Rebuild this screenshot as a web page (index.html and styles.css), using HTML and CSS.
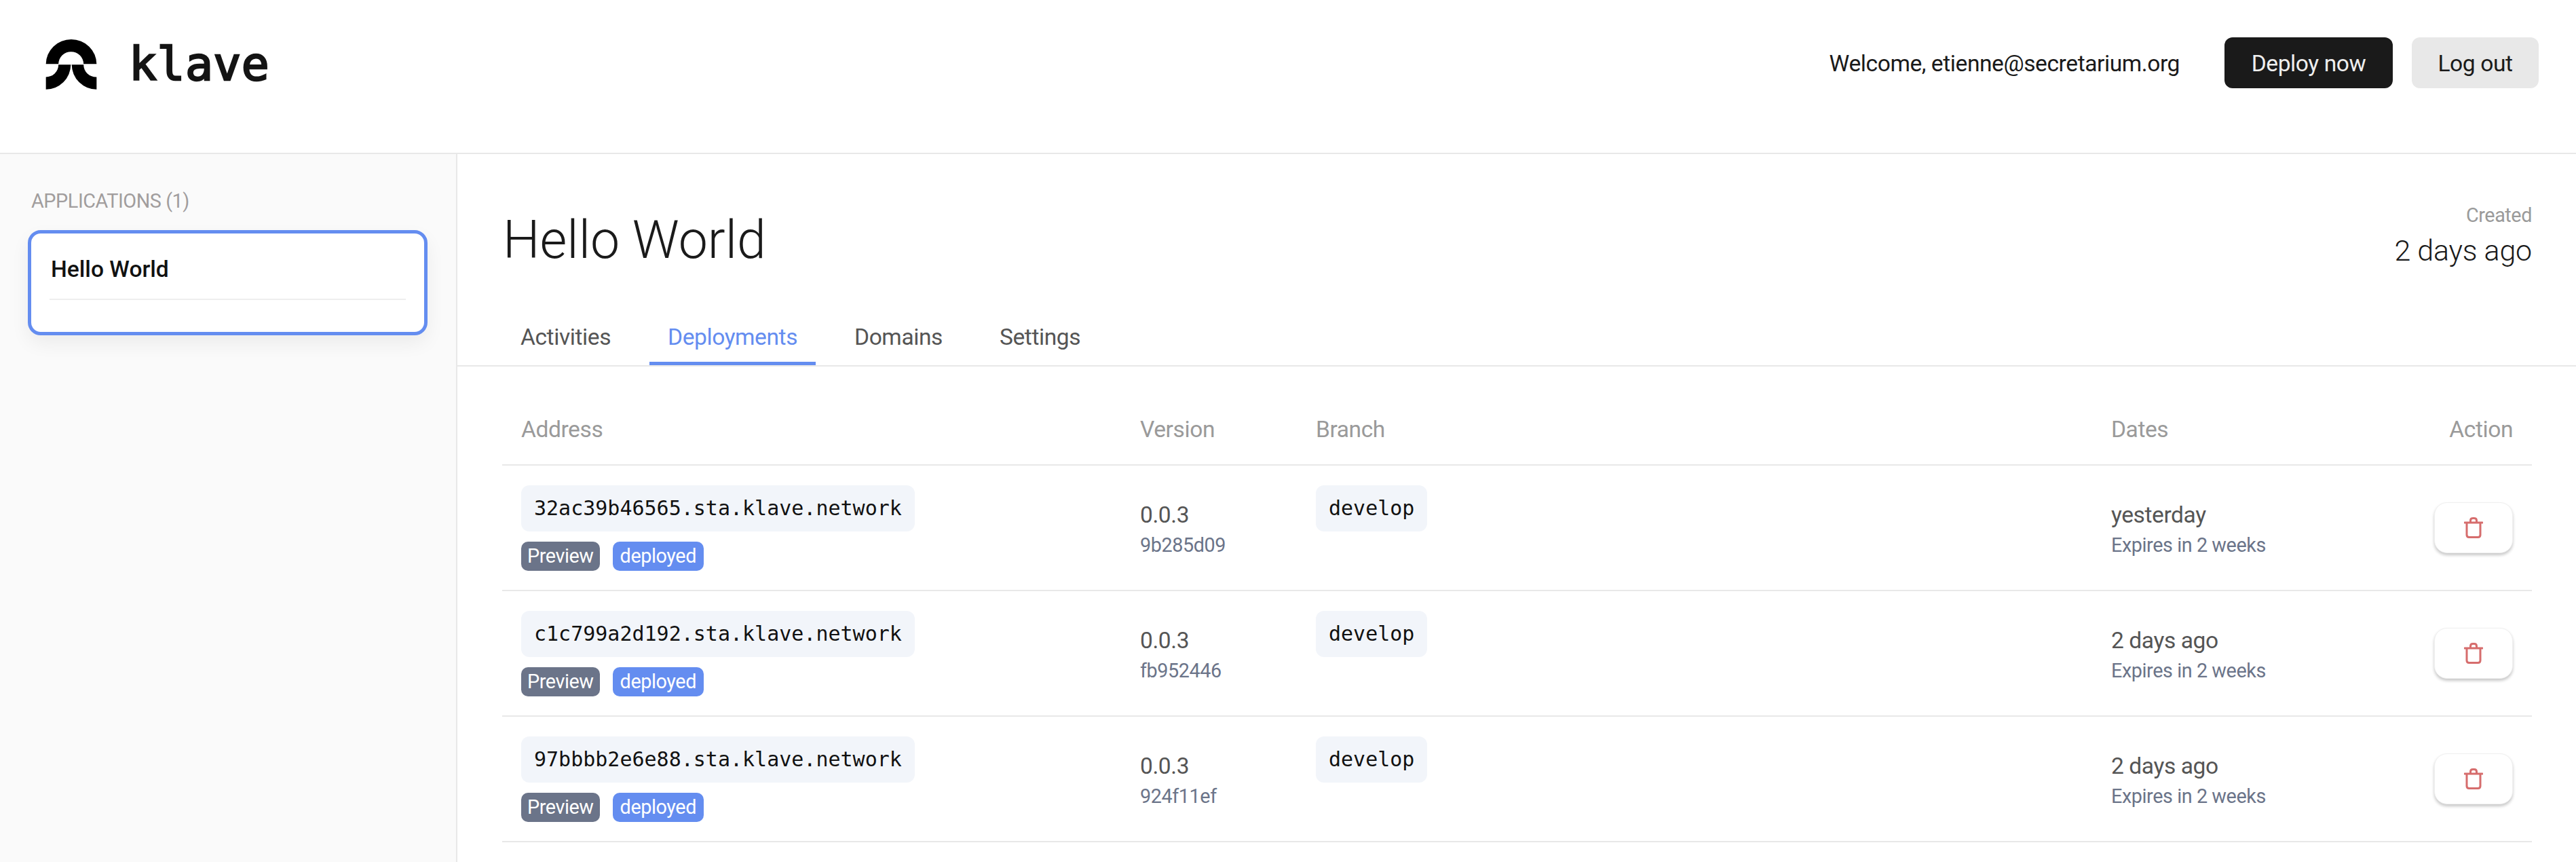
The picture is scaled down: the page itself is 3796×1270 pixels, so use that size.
FILE: index.html
```html
<!DOCTYPE html>
<html lang="en">
  <head>
    <meta charset="UTF-8" />
    <meta name="viewport" content="width=device-width, initial-scale=1.0" />
    <title>Klave - Hello World</title>
    <link rel="stylesheet" href="styles.css">
  </head>
  <body>
    <header class="topbar">
      <a class="brand" href="#">
        <svg class="brand-logo" viewBox="0 0 226 224" fill="#000">
          <path d="M0 110A113 110 0 0 1 226 110H168A56 55 0 0 0 56 110Z" />
          <path d="M0 168A56 55 0 0 0 56 113H111A111 111 0 0 1 0 223Z" />
          <path d="M226 168A56 55 0 0 1 168 113H115A111 111 0 0 0 226 223Z" />
        </svg>
        <span class="brand-name">klave</span>
      </a>
      <div class="topbar-right">
        <span class="welcome">Welcome, etienne@secretarium.org</span>
        <button class="btn btn-dark" type="button">Deploy now</button>
        <button class="btn btn-light" type="button">Log out</button>
      </div>
    </header>

    <div class="layout">
      <aside class="sidebar">
        <p class="sidebar-title">APPLICATIONS (1)</p>
        <div class="app-card">
          <p class="app-card-name">Hello World</p>
          <div class="app-card-rule"></div>
        </div>
      </aside>

      <main class="main">
        <div class="app-head">
          <h1>Hello World</h1>
          <div class="created">
            <p class="created-label">Created</p>
            <p class="created-value">2 days ago</p>
          </div>
        </div>

        <nav class="tabs">
          <a class="tab" href="#">Activities</a>
          <a class="tab active" href="#">Deployments</a>
          <a class="tab" href="#">Domains</a>
          <a class="tab" href="#">Settings</a>
        </nav>

        <div class="content">
          <table class="deployments">
            <thead>
              <tr>
                <th class="col-address">Address</th>
                <th class="col-version">Version</th>
                <th class="col-branch">Branch</th>
                <th class="col-dates">Dates</th>
                <th class="col-action">Action</th>
              </tr>
            </thead>
            <tbody>
              <tr>
                <td>
                  <code class="chip">32ac39b46565.sta.klave.network</code>
                  <div class="badges"><span class="badge badge-grey">Preview</span><span class="badge badge-blue">deployed</span></div>
                </td>
                <td><p class="main-line">0.0.3</p><p class="sub-line">9b285d09</p></td>
                <td><code class="chip">develop</code></td>
                <td><p class="main-line">yesterday</p><p class="sub-line">Expires in 2 weeks</p></td>
                <td class="cell-action">
                  <button class="btn-delete" type="button">
                    <svg viewBox="0 0 28 31" fill="none" stroke="#d66d6d" stroke-width="3" stroke-linecap="round" stroke-linejoin="round"><path d="M1 8H27M4 8V26Q4 29.500 7.500 29.500H20.500Q24 29.500 24 26V8M9.500 8V5Q9.500 1.500 13 1.500H15Q18.500 1.500 18.500 5V8" /></svg>
                  </button>
                </td>
              </tr>
              <tr>
                <td>
                  <code class="chip">c1c799a2d192.sta.klave.network</code>
                  <div class="badges"><span class="badge badge-grey">Preview</span><span class="badge badge-blue">deployed</span></div>
                </td>
                <td><p class="main-line">0.0.3</p><p class="sub-line">fb952446</p></td>
                <td><code class="chip">develop</code></td>
                <td><p class="main-line">2 days ago</p><p class="sub-line">Expires in 2 weeks</p></td>
                <td class="cell-action">
                  <button class="btn-delete" type="button">
                    <svg viewBox="0 0 28 31" fill="none" stroke="#d66d6d" stroke-width="3" stroke-linecap="round" stroke-linejoin="round"><path d="M1 8H27M4 8V26Q4 29.500 7.500 29.500H20.500Q24 29.500 24 26V8M9.500 8V5Q9.500 1.500 13 1.500H15Q18.500 1.500 18.500 5V8" /></svg>
                  </button>
                </td>
              </tr>
              <tr>
                <td>
                  <code class="chip">97bbbb2e6e88.sta.klave.network</code>
                  <div class="badges"><span class="badge badge-grey">Preview</span><span class="badge badge-blue">deployed</span></div>
                </td>
                <td><p class="main-line">0.0.3</p><p class="sub-line">924f11ef</p></td>
                <td><code class="chip">develop</code></td>
                <td><p class="main-line">2 days ago</p><p class="sub-line">Expires in 2 weeks</p></td>
                <td class="cell-action">
                  <button class="btn-delete" type="button">
                    <svg viewBox="0 0 28 31" fill="none" stroke="#d66d6d" stroke-width="3" stroke-linecap="round" stroke-linejoin="round"><path d="M1 8H27M4 8V26Q4 29.500 7.500 29.500H20.500Q24 29.500 24 26V8M9.500 8V5Q9.500 1.500 13 1.500H15Q18.500 1.500 18.500 5V8" /></svg>
                  </button>
                </td>
              </tr>
              <!-- next row only shows the top edge of its chips -->
              <tr>
                <td><div class="chip-stub chip-stub-address"></div></td>
                <td></td>
                <td><div class="chip-stub chip-stub-branch"></div></td>
                <td></td>
                <td></td>
              </tr>
            </tbody>
          </table>
        </div>
      </main>
    </div>
  </body>
</html>
```

FILE: styles.css
```css
* {
  margin: 0;
  padding: 0;
  box-sizing: border-box;
}

html,
body {
  height: 1270px;
  overflow: hidden;
}

body {
  font-family: Roboto, sans-serif;
  font-weight: 400;
  letter-spacing: -0.027em;
  color: #1a1a1a;
  background: #fff;
}

a {
  color: inherit;
  text-decoration: none;
}

/* top bar */
.topbar {
  height: 227px;
  border-bottom: 2px solid #e8e8e8;
  display: flex;
  justify-content: space-between;
  align-items: flex-start;
  padding: 55px 55px 0 67px;
}

.brand {
  display: flex;
  align-items: center;
  gap: 47px;
}

.brand-logo {
  width: 76px;
  height: 74px;
}

.brand-name {
  font-family: "DejaVu Sans Mono", monospace;
  font-size: 68px;
  letter-spacing: 0.5px;
  -webkit-text-stroke: 2.5px #141414;
  color: #141414;
}

.topbar-right {
  display: flex;
  align-items: center;
  gap: 28px;
}

.welcome {
  font-size: 33.6px;
  margin-right: 38px;
  padding-top: 2px;
}

.btn {
  height: 75px;
  padding-top: 2px;
  border: none;
  border-radius: 12px;
  font-family: inherit;
  letter-spacing: inherit;
  font-size: 33.6px;
}

.btn-dark {
  width: 248px;
  background: #1a1a1a;
  color: #eee;
}

.btn-light {
  width: 187px;
  background: #e8e8e8;
  color: #1a1a1a;
}

/* page */
.layout {
  display: flex;
  height: 1043px;
}

.sidebar {
  width: 674px;
  flex: none;
  background: #fafafa;
  border-right: 2px solid #e8e8e8;
  padding: 49px 42px 0 41px;
}

.sidebar-title {
  font-size: 28.8px;
  line-height: 40px;
  color: #a19d9d;
  margin-bottom: 23px;
  padding-left: 5px;
}

.app-card {
  height: 155px;
  background: #fff;
  border: 5px solid #648df0;
  border-radius: 19px;
  padding: 30px 27px 0;
  box-shadow: 0 12px 28px rgba(0, 0, 0, 0.06);
}

.app-card-name {
  font-size: 33.6px;
  line-height: 46px;
  font-weight: 500;
  letter-spacing: 0;
  padding-left: 2px;
  color: #111;
}

.app-card-rule {
  height: 2px;
  background: #eee;
  margin-top: 20px;
}

.main {
  flex: 1;
  min-width: 0;
}

.app-head {
  display: flex;
  justify-content: space-between;
  padding: 77px 65px 0 67px;
  height: 227px;
}

h1 {
  font-size: 77px;
  line-height: 100px;
  font-weight: 300;
  letter-spacing: 0;
}

.created {
  text-align: right;
  margin-top: -2px;
}

.created-label {
  font-size: 28.8px;
  line-height: 30px;
  color: #9a9a9a;
}

.created-value {
  font-size: 43px;
  line-height: 58px;
  margin-top: 8px;
  font-weight: 300;
  letter-spacing: -0.005em;
}

.tabs {
  display: flex;
  height: 86px;
  border-bottom: 2px solid #e8e8e8;
  padding: 0 0 0 66px;
}

.tab {
  padding: 5px 27px 0;
  margin-right: 30px;
  font-size: 33.6px;
  color: #555;
  display: flex;
  align-items: center;
  height: 84px;
  border-bottom: 5px solid transparent;
}

.tab.active {
  color: #648df0;
  border-bottom-color: #648df0;
}

.content {
  padding: 0 65px 0 66px;
}

/* table */
.deployments {
  width: 100%;
  border-collapse: collapse;
  table-layout: fixed;
}

.deployments th {
  height: 145px;
  padding: 40px 28px 0;
  font-size: 33.6px;
  font-weight: 400;
  text-align: left;
  color: #9a9a9a;
  border-bottom: 2px solid #e8e8e8;
}

.deployments td {
  height: 185px;
  padding: 29px 28px 0;
  vertical-align: top;
  border-bottom: 2px solid #e8e8e8;
}

.col-address {
  width: 912px;
}

.col-version {
  width: 259px;
}

.col-branch {
  width: 1172px;
}

.deployments .col-action {
  text-align: right;
}

.chip {
  display: inline-block;
  height: 68px;
  line-height: 68px;
  padding: 0 19px;
  font-family: "DejaVu Sans Mono", monospace;
  font-size: 30px;
  letter-spacing: 0;
  color: #111;
  background: #f2f5fa;
  border-radius: 12px;
}

.chip-stub {
  height: 68px;
  background: #f2f5fa;
  border-radius: 12px;
}

.chip-stub-address {
  width: 578px;
}

.chip-stub-branch {
  width: 164px;
}

.badges {
  display: flex;
  gap: 19px;
  margin-top: 15px;
}

.badge {
  height: 43px;
  line-height: 42px;
  padding: 0 9px;
  font-size: 28.8px;
  color: #fff;
  border-radius: 10px;
}

.badge-grey {
  background: #6b7489;
}

.badge-blue {
  padding: 0 11px;
  background: #648df0;
}

.main-line {
  font-size: 33.6px;
  line-height: 46px;
  color: #555;
  padding-top: 21px;
}

.sub-line {
  font-size: 28.8px;
  line-height: 42px;
  color: #6b7489;
}

.cell-action {
  text-align: right;
}

.btn-delete {
  width: 116px;
  height: 75px;
  margin-top: 25px;
  background: #fff;
  border: 1px solid #f0f0f0;
  border-radius: 19px;
  box-shadow: 0 3px 4px rgba(0, 0, 0, 0.22);
  display: inline-flex;
  align-items: center;
  justify-content: center;
}

.btn-delete svg {
  width: 28px;
  height: 31px;
}
```
